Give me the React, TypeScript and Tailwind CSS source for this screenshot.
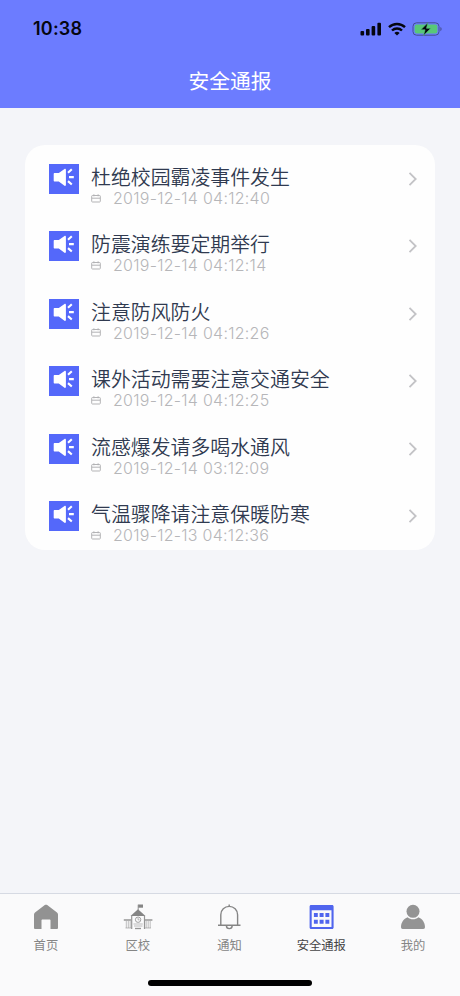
import { ReactNode } from "react";

const notices = [
  { title: "杜绝校园霸凌事件发生", time: "2019-12-14 04:12:40" },
  { title: "防震演练要定期举行", time: "2019-12-14 04:12:14" },
  { title: "注意防风防火", time: "2019-12-14 04:12:26" },
  { title: "课外活动需要注意交通安全", time: "2019-12-14 04:12:25" },
  { title: "流感爆发请多喝水通风", time: "2019-12-14 03:12:09" },
  { title: "气温骤降请注意保暖防寒", time: "2019-12-13 04:12:36" },
];

const StatusBar = () => (
  <div className="flex h-[57px] items-center justify-between pl-[33px] pr-[17px] text-[#05060f]">
    <span className="text-[18px] font-semibold leading-none tracking-[0.2px]">10:38</span>
    <div className="flex items-center">
      <svg width="22" height="14" viewBox="0 0 22 14" fill="currentColor">
        <rect x="0.5" y="9" width="3.6" height="4.5" rx="1" />
        <rect x="6" y="7" width="3.6" height="6.5" rx="1" />
        <rect x="11.6" y="4" width="3.6" height="9.5" rx="1" />
        <rect x="17.4" y="0.7" width="3.6" height="12.8" rx="1" />
      </svg>
      <svg className="ml-[6px]" width="18" height="14" viewBox="0 0 18 14" fill="none" stroke="currentColor" strokeWidth="2.4">
        <path d="M1 5.2a11.5 11.5 0 0 1 16 0" />
        <path d="M4 8.5a7.2 7.2 0 0 1 10 0" />
        <path d="M6.4 10.9a3.8 3.8 0 0 1 5.2 0L9 13.5z" fill="currentColor" stroke="none" />
      </svg>
      <svg className="ml-[6px]" width="31" height="14" viewBox="0 0 31 14">
        <rect x="1" y="0.8" width="26" height="12.4" rx="3.6" fill="none" stroke="#454f92" strokeWidth="1" />
        <rect x="2.6" y="2.4" width="22.8" height="9.2" rx="2" fill="#58c878" />
        <path d="M28.4 5v4.2c1.6-.6 1.6-3.6 0-4.2z" fill="#454f92" />
        <path d="M15.8 0.8 8.8 7.8h4.3l-1.6 5.6 7.3-7.1h-4.3z" fill="#05060f" stroke="#58c878" strokeWidth="0.6" />
      </svg>
    </div>
  </div>
);

const SpeakerIcon = () => (
  <svg className="mt-[19px] shrink-0" width="30" height="30" viewBox="0 0 30 30">
    <rect width="30" height="30" fill="#5468fa" />
    <path d="M5.7 8.9h4.100l5.700-3.800c.7-.5 1.400-.2 1.400.6v15.400c0 .8-.7 1.100-1.400.6l-5.700-4.300H5.700c-.6 0-1-.4-1-1V9.900c0-.6.4-1 1-1z" fill="#fff" />
    <path d="m19 8.7 3.8-3.4M20 13.1h4.8M19 17.1l3.8 3.4" stroke="#fff" strokeWidth="2.1" />
  </svg>
);

const DateIcon = () => (
  <svg width="10" height="9" viewBox="0 0 10 9" fill="none" stroke="#b3b3b5" strokeWidth="1">
    <rect x="0.7" y="1.5" width="8.6" height="6.5" rx="0.7" />
    <path d="M0.7 4.2h8.6M2.9 0.3v2M7.1 0.3v2" />
  </svg>
);

const NoticeRow = ({ title, time }: { title: string; time: string }) => (
  <li className="flex h-[67.45px] pl-6 pr-[17px]">
    <SpeakerIcon />
    <div className="ml-3 flex-1 pt-[22px]">
      <p className="whitespace-nowrap text-[19.9px] font-[350] leading-[22px] text-[#303a50]">{title}</p>
      <div className="flex h-[18px] items-center">
        <DateIcon />
        <time className="ml-3 whitespace-nowrap text-[16px] font-light leading-[18px] tracking-[0.26px] text-[#b6b6b9]">{time}</time>
      </div>
    </div>
    <svg className="mt-[26px] shrink-0" width="10" height="16" viewBox="0 0 10 16" fill="none" stroke="#c3c3c6" strokeWidth="1.8">
      <path d="m1.5 1.8 6.2 6.2-6.2 6.2" />
    </svg>
  </li>
);

const HomeIcon = () => (
  <svg width="28" height="28" viewBox="0 0 28 28" fill="#929292">
    <path d="M12.8 2.1 3 9.5c-.7.5-1 1.2-1 2v13.2c0 .8.5 1.3 1.3 1.3h6.2v-8.4c0-.6.4-1 1-1h7c.6 0 1 .4 1 1V26h6.2c.8 0 1.3-.5 1.3-1.3V11.5c0-.8-.3-1.5-1-2l-9.8-7.4c-.7-.5-1.7-.5-2.4 0z" />
  </svg>
);

const SchoolIcon = () => (
  <svg width="30" height="28" viewBox="0 0 30 28" fill="none" stroke="#969696">
    <path d="M15.2 7V1.7" strokeWidth="1" />
    <path d="M15.2 1.5h4.8v3.2h-4.8z" fill="#858585" stroke="none" />
    <path d="M15 6.2 22.5 13h-15z" fill="#858585" stroke="none" />
    <path d="M8.7 13v13M21.5 13v13" strokeWidth="1.2" />
    <path d="M0.8 17h7.4M22 17h7.4" strokeWidth="1.3" />
    <path d="M3.3 18v7M5.3 18v7M7.2 18v7M23.2 18v7M25.2 18v7M27.2 18v7" strokeWidth="0.6" />
    <path d="M2.5 25h5.5M22 25h6M10.5 21h9.3M11 23h8.5" strokeWidth="0.6" />
    <circle cx="15.1" cy="16.7" r="2.7" strokeWidth="0.9" />
    <path d="M15.1 15v1.9h1.5" strokeWidth="0.7" />
    <path d="M12 25.5h6" strokeWidth="1.3" />
  </svg>
);

const BellIcon = () => (
  <svg width="28" height="28" viewBox="0 0 28 28" fill="none" stroke="#858585" strokeWidth="1.4">
    <path d="M5.8 22V11.8a8.4 8.4 0 0 1 16.8 0V22M3 22.2h22.5" />
    <path d="M11.4 22.5c0 4.2 5.8 4.2 5.8 0M14.2 1.5v2" />
  </svg>
);

const CalendarIcon = () => (
  <svg width="28" height="28" viewBox="-0.6 0 28 28" fill="#5065ee">
    <path fillRule="evenodd" d="M3.5 2h21c.9 0 1.5.6 1.5 1.5v21c0 .9-.6 1.5-1.5 1.5h-21c-.9 0-1.5-.6-1.5-1.5v-21C2 2.6 2.6 2 3.5 2zm.6 5.3v16.6h19.8V7.3z" />
    <path d="M6.3 10h3.9v4H6.3zM12 10h4v4h-4zM17.8 10h3.9v4h-3.9zM6.3 16.7h3.9v4H6.3zM12 16.7h4v4h-4zM17.8 16.7h3.9v4h-3.9z" />
  </svg>
);

const UserIcon = () => (
  <svg width="28" height="28" viewBox="0 0 28 28" fill="#949494">
    <circle cx="14" cy="8.3" r="6.5" />
    <path d="M8.6 14.2c3.2 2.7 7.6 2.7 10.8 0 3.9 1.6 6.6 5.3 6.6 9.8 0 1.2-.6 2-1.7 2H3.7C2.6 26 2 25.2 2 24c0-4.5 2.7-8.2 6.6-9.8z" />
  </svg>
);

const tabs: { label: string; icon: ReactNode; active?: boolean }[] = [
  { label: "首页", icon: <HomeIcon /> },
  { label: "区校", icon: <SchoolIcon /> },
  { label: "通知", icon: <BellIcon /> },
  { label: "安全通报", icon: <CalendarIcon />, active: true },
  { label: "我的", icon: <UserIcon /> },
];

export default function App() {
  return (
    <div className="flex h-[996px] w-[460px] flex-col bg-[#f4f5f9] font-['Inter','Noto_Sans_CJK_SC',sans-serif]">
      <header className="h-[108px] bg-[#6c7cff]">
        <StatusBar />
        <h1 className="mt-[10px] text-center text-[20.8px] leading-[30px] text-white">安全通报</h1>
      </header>

      <main className="flex-1 px-[25px] pt-[37px]">
        <ul className="rounded-[20px] bg-[#fefefe]">
          {notices.map((notice) => (
            <NoticeRow key={notice.title} {...notice} />
          ))}
        </ul>
      </main>

      <footer className="flex h-[103px] flex-col items-center border-t border-[#d6dae3] bg-[#fafafb]">
        <nav className="flex w-full pr-px">
          {tabs.map((tab) => (
            <div key={tab.label} className="flex flex-1 flex-col items-center pt-[9px]">
              {tab.icon}
              <span className={`mt-1.5 text-[12.3px] leading-[18px] ${tab.active ? "text-[#444446]" : "text-[#858585]"}`}>
                {tab.label}
              </span>
            </div>
          ))}
        </nav>
        <div className="mt-[25px] h-[6px] w-[164px] rounded-full bg-black" />
      </footer>
    </div>
  );
}
